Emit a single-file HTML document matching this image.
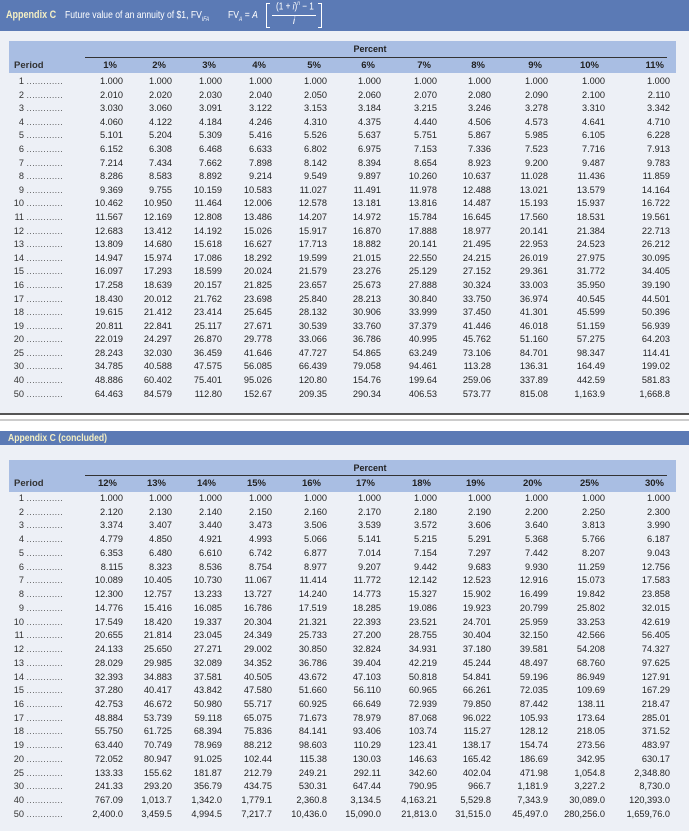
<!DOCTYPE html>
<html><head><meta charset="utf-8">
<style>
*{margin:0;padding:0;box-sizing:border-box}
body{width:689px;height:831px;background:#fff;font-family:"Liberation Sans",Arial,sans-serif;color:#222;position:relative;overflow:hidden}
.bar{position:absolute;left:0;width:689px;background:#5b7ab5;color:#f4efc4}
.panel{position:absolute;left:0;width:689px;background:#edf0f6}
.band{position:absolute;left:9px;width:667px;background:#a9bee3}
.pct{position:absolute;left:340px;width:60px;text-align:center;font-size:9px;font-weight:bold;color:#222}
.line{position:absolute;left:85px;width:582px;height:1px;background:#333}
.tbl{position:absolute;left:10px;font-size:9.2px}
.r{display:flex;white-space:nowrap;height:13.6px;line-height:13.6px}
.b .r{height:13.74px;line-height:13.74px}
.r span{flex:none;text-align:right}
.r span:nth-child(1){width:70px;text-align:left;color:#333}
.r span:nth-child(1) em{font-style:normal;display:inline-block;width:14px;text-align:right}
.r span:nth-child(2){width:43px}
.r span:nth-child(3){width:49px}
.r span:nth-child(4){width:50px}
.r span:nth-child(5){width:50px}
.r span:nth-child(6){width:55px}
.r span:nth-child(7){width:54px}
.r span:nth-child(8){width:56px}
.r span:nth-child(9){width:54px}
.r span:nth-child(10){width:57px}
.r span:nth-child(11){width:57px}
.r span:nth-child(12){width:65px}
.h{position:absolute;left:10px;font-size:9.5px;font-weight:bold}
.h .r span{padding-right:6px}
.h .r span:nth-child(1){padding-left:4px}
.d{letter-spacing:0.6px;font-size:8px;font-style:normal}
.sx{position:absolute;transform:scaleX(0.82);transform-origin:left top;white-space:nowrap}
</style></head><body>

<div class="bar" style="top:0;height:31px">
 <div class="sx" style="left:6px;top:9px;font-size:11px;font-weight:bold">Appendix C</div>
 <div class="sx" style="left:65px;top:9px;font-size:10.5px;color:#fff">Future value of an annuity of $1, FV<sub style="font-size:6px;font-style:italic">IFA</sub></div>
 <div class="sx" style="left:228px;top:9px;font-size:10.5px;color:#fff">FV<sub style="font-size:6px;font-style:italic">A</sub> = <i>A</i></div>
 <div style="position:absolute;left:266px;top:3px;width:4px;height:25px;border:1px solid #fff;border-right:none"></div>
 <div style="position:absolute;left:318px;top:3px;width:4px;height:25px;border:1px solid #fff;border-left:none"></div>
 <div class="sx" style="left:276px;top:1px;font-size:10px;color:#fff">(1 + <i>i</i>)<sup style="font-size:6px"><i>n</i></sup> − 1</div>
 <div style="position:absolute;left:272px;top:15px;width:44px;height:1px;background:#fff"></div>
 <div style="position:absolute;left:272px;top:16px;width:44px;text-align:center;font-size:10px;color:#fff"><i>i</i></div>
</div>

<div class="panel" style="top:31px;height:383px"></div>
<div style="position:absolute;left:0;top:413px;width:689px;height:2px;background:#555"></div>
<div style="position:absolute;left:0;top:419px;width:689px;height:2px;background:#ccc"></div>
<div class="band" style="top:41px;height:32px"></div>
<div class="pct" style="top:44px">Percent</div>
<div class="line" style="top:57px"></div>
<div class="h" style="top:59px"><div class="r"><span>Period</span><span>1%</span><span>2%</span><span>3%</span><span>4%</span><span>5%</span><span>6%</span><span>7%</span><span>8%</span><span>9%</span><span>10%</span><span>11%</span></div></div>

<div class="tbl" style="top:75px">
<div class="r"><span><em>1</em> <i class="d">.............</i></span><span>1.000</span><span>1.000</span><span>1.000</span><span>1.000</span><span>1.000</span><span>1.000</span><span>1.000</span><span>1.000</span><span>1.000</span><span>1.000</span><span>1.000</span></div>
<div class="r"><span><em>2</em> <i class="d">.............</i></span><span>2.010</span><span>2.020</span><span>2.030</span><span>2.040</span><span>2.050</span><span>2.060</span><span>2.070</span><span>2.080</span><span>2.090</span><span>2.100</span><span>2.110</span></div>
<div class="r"><span><em>3</em> <i class="d">.............</i></span><span>3.030</span><span>3.060</span><span>3.091</span><span>3.122</span><span>3.153</span><span>3.184</span><span>3.215</span><span>3.246</span><span>3.278</span><span>3.310</span><span>3.342</span></div>
<div class="r"><span><em>4</em> <i class="d">.............</i></span><span>4.060</span><span>4.122</span><span>4.184</span><span>4.246</span><span>4.310</span><span>4.375</span><span>4.440</span><span>4.506</span><span>4.573</span><span>4.641</span><span>4.710</span></div>
<div class="r"><span><em>5</em> <i class="d">.............</i></span><span>5.101</span><span>5.204</span><span>5.309</span><span>5.416</span><span>5.526</span><span>5.637</span><span>5.751</span><span>5.867</span><span>5.985</span><span>6.105</span><span>6.228</span></div>
<div class="r"><span><em>6</em> <i class="d">.............</i></span><span>6.152</span><span>6.308</span><span>6.468</span><span>6.633</span><span>6.802</span><span>6.975</span><span>7.153</span><span>7.336</span><span>7.523</span><span>7.716</span><span>7.913</span></div>
<div class="r"><span><em>7</em> <i class="d">.............</i></span><span>7.214</span><span>7.434</span><span>7.662</span><span>7.898</span><span>8.142</span><span>8.394</span><span>8.654</span><span>8.923</span><span>9.200</span><span>9.487</span><span>9.783</span></div>
<div class="r"><span><em>8</em> <i class="d">.............</i></span><span>8.286</span><span>8.583</span><span>8.892</span><span>9.214</span><span>9.549</span><span>9.897</span><span>10.260</span><span>10.637</span><span>11.028</span><span>11.436</span><span>11.859</span></div>
<div class="r"><span><em>9</em> <i class="d">.............</i></span><span>9.369</span><span>9.755</span><span>10.159</span><span>10.583</span><span>11.027</span><span>11.491</span><span>11.978</span><span>12.488</span><span>13.021</span><span>13.579</span><span>14.164</span></div>
<div class="r"><span><em>10</em> <i class="d">.............</i></span><span>10.462</span><span>10.950</span><span>11.464</span><span>12.006</span><span>12.578</span><span>13.181</span><span>13.816</span><span>14.487</span><span>15.193</span><span>15.937</span><span>16.722</span></div>
<div class="r"><span><em>11</em> <i class="d">.............</i></span><span>11.567</span><span>12.169</span><span>12.808</span><span>13.486</span><span>14.207</span><span>14.972</span><span>15.784</span><span>16.645</span><span>17.560</span><span>18.531</span><span>19.561</span></div>
<div class="r"><span><em>12</em> <i class="d">.............</i></span><span>12.683</span><span>13.412</span><span>14.192</span><span>15.026</span><span>15.917</span><span>16.870</span><span>17.888</span><span>18.977</span><span>20.141</span><span>21.384</span><span>22.713</span></div>
<div class="r"><span><em>13</em> <i class="d">.............</i></span><span>13.809</span><span>14.680</span><span>15.618</span><span>16.627</span><span>17.713</span><span>18.882</span><span>20.141</span><span>21.495</span><span>22.953</span><span>24.523</span><span>26.212</span></div>
<div class="r"><span><em>14</em> <i class="d">.............</i></span><span>14.947</span><span>15.974</span><span>17.086</span><span>18.292</span><span>19.599</span><span>21.015</span><span>22.550</span><span>24.215</span><span>26.019</span><span>27.975</span><span>30.095</span></div>
<div class="r"><span><em>15</em> <i class="d">.............</i></span><span>16.097</span><span>17.293</span><span>18.599</span><span>20.024</span><span>21.579</span><span>23.276</span><span>25.129</span><span>27.152</span><span>29.361</span><span>31.772</span><span>34.405</span></div>
<div class="r"><span><em>16</em> <i class="d">.............</i></span><span>17.258</span><span>18.639</span><span>20.157</span><span>21.825</span><span>23.657</span><span>25.673</span><span>27.888</span><span>30.324</span><span>33.003</span><span>35.950</span><span>39.190</span></div>
<div class="r"><span><em>17</em> <i class="d">.............</i></span><span>18.430</span><span>20.012</span><span>21.762</span><span>23.698</span><span>25.840</span><span>28.213</span><span>30.840</span><span>33.750</span><span>36.974</span><span>40.545</span><span>44.501</span></div>
<div class="r"><span><em>18</em> <i class="d">.............</i></span><span>19.615</span><span>21.412</span><span>23.414</span><span>25.645</span><span>28.132</span><span>30.906</span><span>33.999</span><span>37.450</span><span>41.301</span><span>45.599</span><span>50.396</span></div>
<div class="r"><span><em>19</em> <i class="d">.............</i></span><span>20.811</span><span>22.841</span><span>25.117</span><span>27.671</span><span>30.539</span><span>33.760</span><span>37.379</span><span>41.446</span><span>46.018</span><span>51.159</span><span>56.939</span></div>
<div class="r"><span><em>20</em> <i class="d">.............</i></span><span>22.019</span><span>24.297</span><span>26.870</span><span>29.778</span><span>33.066</span><span>36.786</span><span>40.995</span><span>45.762</span><span>51.160</span><span>57.275</span><span>64.203</span></div>
<div class="r"><span><em>25</em> <i class="d">.............</i></span><span>28.243</span><span>32.030</span><span>36.459</span><span>41.646</span><span>47.727</span><span>54.865</span><span>63.249</span><span>73.106</span><span>84.701</span><span>98.347</span><span>114.41</span></div>
<div class="r"><span><em>30</em> <i class="d">.............</i></span><span>34.785</span><span>40.588</span><span>47.575</span><span>56.085</span><span>66.439</span><span>79.058</span><span>94.461</span><span>113.28</span><span>136.31</span><span>164.49</span><span>199.02</span></div>
<div class="r"><span><em>40</em> <i class="d">.............</i></span><span>48.886</span><span>60.402</span><span>75.401</span><span>95.026</span><span>120.80</span><span>154.76</span><span>199.64</span><span>259.06</span><span>337.89</span><span>442.59</span><span>581.83</span></div>
<div class="r"><span><em>50</em> <i class="d">.............</i></span><span>64.463</span><span>84.579</span><span>112.80</span><span>152.67</span><span>209.35</span><span>290.34</span><span>406.53</span><span>573.77</span><span>815.08</span><span>1,163.9</span><span>1,668.8</span></div>
</div>

<div class="bar" style="top:431px;height:14px">
 <div class="sx" style="left:8px;top:1px;font-size:10.5px;font-weight:bold">Appendix C (concluded)</div>
</div>
<div class="panel" style="top:445px;height:386px"></div>
<div class="band" style="top:460px;height:32px"></div>
<div class="pct" style="top:463px">Percent</div>
<div class="line" style="top:475px"></div>
<div class="h" style="top:477px"><div class="r"><span>Period</span><span>12%</span><span>13%</span><span>14%</span><span>15%</span><span>16%</span><span>17%</span><span>18%</span><span>19%</span><span>20%</span><span>25%</span><span>30%</span></div></div>

<div class="tbl b" style="top:492px">
<div class="r"><span><em>1</em> <i class="d">.............</i></span><span>1.000</span><span>1.000</span><span>1.000</span><span>1.000</span><span>1.000</span><span>1.000</span><span>1.000</span><span>1.000</span><span>1.000</span><span>1.000</span><span>1.000</span></div>
<div class="r"><span><em>2</em> <i class="d">.............</i></span><span>2.120</span><span>2.130</span><span>2.140</span><span>2.150</span><span>2.160</span><span>2.170</span><span>2.180</span><span>2.190</span><span>2.200</span><span>2.250</span><span>2.300</span></div>
<div class="r"><span><em>3</em> <i class="d">.............</i></span><span>3.374</span><span>3.407</span><span>3.440</span><span>3.473</span><span>3.506</span><span>3.539</span><span>3.572</span><span>3.606</span><span>3.640</span><span>3.813</span><span>3.990</span></div>
<div class="r"><span><em>4</em> <i class="d">.............</i></span><span>4.779</span><span>4.850</span><span>4.921</span><span>4.993</span><span>5.066</span><span>5.141</span><span>5.215</span><span>5.291</span><span>5.368</span><span>5.766</span><span>6.187</span></div>
<div class="r"><span><em>5</em> <i class="d">.............</i></span><span>6.353</span><span>6.480</span><span>6.610</span><span>6.742</span><span>6.877</span><span>7.014</span><span>7.154</span><span>7.297</span><span>7.442</span><span>8.207</span><span>9.043</span></div>
<div class="r"><span><em>6</em> <i class="d">.............</i></span><span>8.115</span><span>8.323</span><span>8.536</span><span>8.754</span><span>8.977</span><span>9.207</span><span>9.442</span><span>9.683</span><span>9.930</span><span>11.259</span><span>12.756</span></div>
<div class="r"><span><em>7</em> <i class="d">.............</i></span><span>10.089</span><span>10.405</span><span>10.730</span><span>11.067</span><span>11.414</span><span>11.772</span><span>12.142</span><span>12.523</span><span>12.916</span><span>15.073</span><span>17.583</span></div>
<div class="r"><span><em>8</em> <i class="d">.............</i></span><span>12.300</span><span>12.757</span><span>13.233</span><span>13.727</span><span>14.240</span><span>14.773</span><span>15.327</span><span>15.902</span><span>16.499</span><span>19.842</span><span>23.858</span></div>
<div class="r"><span><em>9</em> <i class="d">.............</i></span><span>14.776</span><span>15.416</span><span>16.085</span><span>16.786</span><span>17.519</span><span>18.285</span><span>19.086</span><span>19.923</span><span>20.799</span><span>25.802</span><span>32.015</span></div>
<div class="r"><span><em>10</em> <i class="d">.............</i></span><span>17.549</span><span>18.420</span><span>19.337</span><span>20.304</span><span>21.321</span><span>22.393</span><span>23.521</span><span>24.701</span><span>25.959</span><span>33.253</span><span>42.619</span></div>
<div class="r"><span><em>11</em> <i class="d">.............</i></span><span>20.655</span><span>21.814</span><span>23.045</span><span>24.349</span><span>25.733</span><span>27.200</span><span>28.755</span><span>30.404</span><span>32.150</span><span>42.566</span><span>56.405</span></div>
<div class="r"><span><em>12</em> <i class="d">.............</i></span><span>24.133</span><span>25.650</span><span>27.271</span><span>29.002</span><span>30.850</span><span>32.824</span><span>34.931</span><span>37.180</span><span>39.581</span><span>54.208</span><span>74.327</span></div>
<div class="r"><span><em>13</em> <i class="d">.............</i></span><span>28.029</span><span>29.985</span><span>32.089</span><span>34.352</span><span>36.786</span><span>39.404</span><span>42.219</span><span>45.244</span><span>48.497</span><span>68.760</span><span>97.625</span></div>
<div class="r"><span><em>14</em> <i class="d">.............</i></span><span>32.393</span><span>34.883</span><span>37.581</span><span>40.505</span><span>43.672</span><span>47.103</span><span>50.818</span><span>54.841</span><span>59.196</span><span>86.949</span><span>127.91</span></div>
<div class="r"><span><em>15</em> <i class="d">.............</i></span><span>37.280</span><span>40.417</span><span>43.842</span><span>47.580</span><span>51.660</span><span>56.110</span><span>60.965</span><span>66.261</span><span>72.035</span><span>109.69</span><span>167.29</span></div>
<div class="r"><span><em>16</em> <i class="d">.............</i></span><span>42.753</span><span>46.672</span><span>50.980</span><span>55.717</span><span>60.925</span><span>66.649</span><span>72.939</span><span>79.850</span><span>87.442</span><span>138.11</span><span>218.47</span></div>
<div class="r"><span><em>17</em> <i class="d">.............</i></span><span>48.884</span><span>53.739</span><span>59.118</span><span>65.075</span><span>71.673</span><span>78.979</span><span>87.068</span><span>96.022</span><span>105.93</span><span>173.64</span><span>285.01</span></div>
<div class="r"><span><em>18</em> <i class="d">.............</i></span><span>55.750</span><span>61.725</span><span>68.394</span><span>75.836</span><span>84.141</span><span>93.406</span><span>103.74</span><span>115.27</span><span>128.12</span><span>218.05</span><span>371.52</span></div>
<div class="r"><span><em>19</em> <i class="d">.............</i></span><span>63.440</span><span>70.749</span><span>78.969</span><span>88.212</span><span>98.603</span><span>110.29</span><span>123.41</span><span>138.17</span><span>154.74</span><span>273.56</span><span>483.97</span></div>
<div class="r"><span><em>20</em> <i class="d">.............</i></span><span>72.052</span><span>80.947</span><span>91.025</span><span>102.44</span><span>115.38</span><span>130.03</span><span>146.63</span><span>165.42</span><span>186.69</span><span>342.95</span><span>630.17</span></div>
<div class="r"><span><em>25</em> <i class="d">.............</i></span><span>133.33</span><span>155.62</span><span>181.87</span><span>212.79</span><span>249.21</span><span>292.11</span><span>342.60</span><span>402.04</span><span>471.98</span><span>1,054.8</span><span>2,348.80</span></div>
<div class="r"><span><em>30</em> <i class="d">.............</i></span><span>241.33</span><span>293.20</span><span>356.79</span><span>434.75</span><span>530.31</span><span>647.44</span><span>790.95</span><span>966.7</span><span>1,181.9</span><span>3,227.2</span><span>8,730.0</span></div>
<div class="r"><span><em>40</em> <i class="d">.............</i></span><span>767.09</span><span>1,013.7</span><span>1,342.0</span><span>1,779.1</span><span>2,360.8</span><span>3,134.5</span><span>4,163.21</span><span>5,529.8</span><span>7,343.9</span><span>30,089.0</span><span>120,393.0</span></div>
<div class="r"><span><em>50</em> <i class="d">.............</i></span><span>2,400.0</span><span>3,459.5</span><span>4,994.5</span><span>7,217.7</span><span>10,436.0</span><span>15,090.0</span><span>21,813.0</span><span>31,515.0</span><span>45,497.0</span><span>280,256.0</span><span>1,659,76.0</span></div>
</div>
</body></html>
